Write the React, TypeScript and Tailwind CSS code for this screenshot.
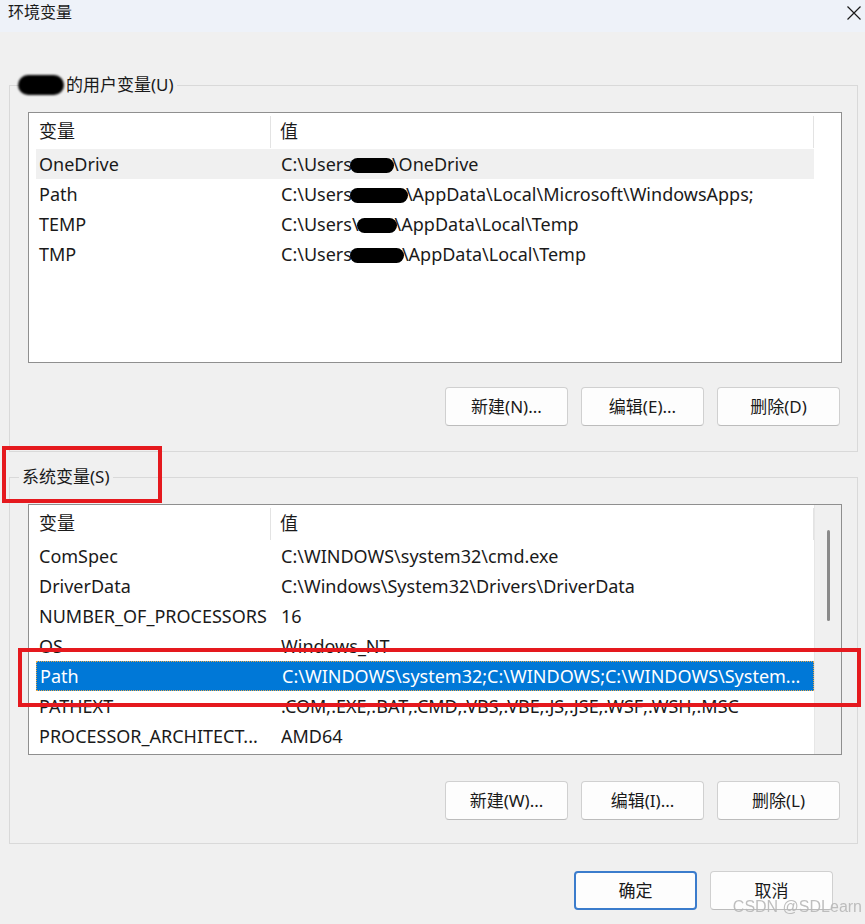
import type { ReactNode } from 'react';

type Row = {
  name: string;
  value: ReactNode;
  hover?: boolean;
  selected?: boolean;
};

const Blob = ({ w }: { w: number }) => (
  <span
    className="inline-block h-[15px] bg-black rounded-full blur-[0.6px] align-[-2px] -mx-[2px]"
    style={{ width: w }}
  />
);

const userVars: Row[] = [
  { name: 'OneDrive', value: <>C:\Users<Blob w={44} />\OneDrive</>, hover: true },
  { name: 'Path', value: <>C:\Users<Blob w={58} />\AppData\Local\Microsoft\WindowsApps;</> },
  { name: 'TEMP', value: <>C:\Users\<Blob w={40} />\AppData\Local\Temp</> },
  { name: 'TMP', value: <>C:\Users<Blob w={54} />\AppData\Local\Temp</> },
];

const systemVars: Row[] = [
  { name: 'ComSpec', value: 'C:\\WINDOWS\\system32\\cmd.exe' },
  { name: 'DriverData', value: 'C:\\Windows\\System32\\Drivers\\DriverData' },
  { name: 'NUMBER_OF_PROCESSORS', value: '16' },
  { name: 'OS', value: 'Windows_NT' },
  { name: 'Path', value: 'C:\\WINDOWS\\system32;C:\\WINDOWS;C:\\WINDOWS\\System...', selected: true },
  { name: 'PATHEXT', value: '.COM;.EXE;.BAT;.CMD;.VBS;.VBE;.JS;.JSE;.WSF;.WSH;.MSC' },
  { name: 'PROCESSOR_ARCHITECT...', value: 'AMD64' },
];

const WinButton = ({ children, primary }: { children: ReactNode; primary?: boolean }) => (
  <button
    className={`w-[123px] h-[39px] rounded-[4px] bg-[#fdfdfd] text-[17px] text-[#1a1a1a] flex items-center justify-center ${
      primary ? 'border-2 border-[#3b7ccc]' : 'border border-[#d0d0d0] border-b-[#bcbcbc]'
    }`}
  >
    {children}
  </button>
);

const VarList = ({ rows, scroll }: { rows: Row[]; scroll?: boolean }) => (
  <div className="h-[251px] border border-[#8f8f8f] bg-white flex text-[18px]">
    <div className="w-[785px] pl-[7px] pt-[1px]">
      <div className="h-[35px] flex items-center text-[#1a1a1a]">
        <div className="w-[235px] h-[32px] pl-[3px] flex items-center border-r border-[#e3e3e3]">变量</div>
        <div className="flex-1 h-[32px] pl-[9px] flex items-center border-r border-[#e3e3e3]">值</div>
      </div>
      {rows.map((row) => (
        <div
          key={row.name}
          className={`h-[30px] flex items-center whitespace-nowrap ${
            row.selected
              ? 'bg-[#0078d7] text-white border border-dotted border-[#e9a848]'
              : row.hover
              ? 'bg-[#f0f0f0] text-[#1a1a1a]'
              : 'text-[#1a1a1a]'
          }`}
        >
          <div className="w-[245px] pl-[3px] shrink-0">{row.name}</div>
          <div className="flex-1 overflow-hidden">{row.value}</div>
        </div>
      ))}
    </div>
    {scroll ? (
      <div className="flex-1 bg-[#f0f0f0] border-l border-[#e6e6e6] flex justify-center">
        <div className="w-[3px] h-[91px] mt-[25px] bg-[#8a8a8a] rounded-full" />
      </div>
    ) : (
      <div className="flex-1" />
    )}
  </div>
);

const GroupBox = ({
  legend,
  children,
  className,
}: {
  legend: ReactNode;
  children: ReactNode;
  className?: string;
}) => (
  <fieldset className={`border border-[#d9d9d9] pl-[18px] pr-[15px] ${className ?? ''}`}>
    <legend className="-ml-[9px] px-[3px] leading-[22px] text-[#1a1a1a]">{legend}</legend>
    {children}
  </fieldset>
);

export default function App() {
  return (
    <div
      className="relative w-[865px] h-[924px] overflow-hidden bg-[#f0f0f0] text-[17px]"
      style={{ fontFamily: '"Noto Sans", "Noto Sans CJK SC", sans-serif' }}
    >
      {/* title bar */}
      <div className="h-[32px] bg-[#eef2f9] flex items-start justify-between pl-[8px] pr-[3px]">
        <span className="text-[16px] leading-[24px] text-[#1a1a1a]">环境变量</span>
        <svg width="16" height="14" viewBox="0 0 16 14" className="mt-[6px]">
          <path d="M1.5 0.5 L14.5 13.5 M14.5 0.5 L1.5 13.5" stroke="#1a1a1a" strokeWidth="1.2" />
        </svg>
      </div>

      <div className="pl-[9px] pr-[7px] pt-[42px]">
        <GroupBox
          legend={
            <span className="flex items-center">
              <span className="inline-block w-[46px] h-[20px] bg-black rounded-full blur-[1px] -ml-[4px] mr-[2px]" />
              的用户变量(U)
            </span>
          }
          className="pt-[16px] pb-[25px]"
        >
          <VarList rows={userVars} />
          <div className="mt-[24px] mr-[2px] flex justify-end gap-[13px]">
            <WinButton>新建(N)...</WinButton>
            <WinButton>编辑(E)...</WinButton>
            <WinButton>删除(D)</WinButton>
          </div>
        </GroupBox>

        <GroupBox legend="系统变量(S)" className="mt-[14px] pt-[16px] pb-[23px]">
          <VarList rows={systemVars} scroll />
          <div className="mt-[26px] mr-[2px] flex justify-end gap-[13px]">
            <WinButton>新建(W)...</WinButton>
            <WinButton>编辑(I)...</WinButton>
            <WinButton>删除(L)</WinButton>
          </div>
        </GroupBox>

        <div className="mt-[27px] mr-[25px] flex justify-end gap-[13px]">
          <WinButton primary>确定</WinButton>
          <WinButton>取消</WinButton>
        </div>
      </div>

      {/* annotation boxes */}
      <div className="absolute left-[2px] top-[446px] w-[160px] h-[57px] border-4 border-[#e5191e]" />
      <div className="absolute left-[18px] top-[648px] w-[843px] h-[59px] border-4 border-[#e5191e]" />

      {/* watermark */}
      <div
        className="absolute right-[3px] bottom-[8px] text-[16px] leading-[18px] text-[#b8b8b8] opacity-90"
        style={{ fontFamily: '"Liberation Sans", sans-serif' }}
      >
        CSDN @SDLearn
      </div>
    </div>
  );
}
